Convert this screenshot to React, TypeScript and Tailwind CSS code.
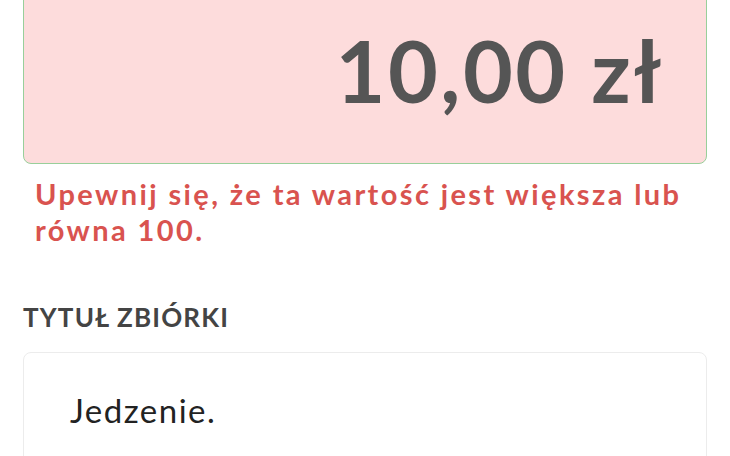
export default function App() {
  return (
    <div className="w-[730px] h-[456px] overflow-hidden bg-white font-['Lato',sans-serif]">
      <div className="px-[23px]">
        <div className="-mt-[20px] h-[184px] rounded-[8px] border border-[#98cf9a] bg-[#fddcdc] flex items-end justify-end pr-[42px] pb-[50px]">
          <span className="text-[86px] leading-none font-bold text-[#555555] tracking-[2.5px]">10,00 zł</span>
        </div>
        <p className="mt-[12px] px-[12px] text-[29px] leading-[36px] font-bold text-[#d9534f] tracking-[2.4px]">
          Upewnij się, że ta wartość jest większa lub równa 100.
        </p>
        <div className="mt-[55px] text-[26px] leading-[28px] font-bold text-[#444444] tracking-[1.2px]">TYTUŁ ZBIÓRKI</div>
        <div className="mt-[21px] h-[140px] rounded-[8px] border border-[#ececec] bg-white px-[46px] pt-[37px]">
          <span className="text-[33px] leading-[40px] text-[#222222] tracking-[1.5px]">Jedzenie.</span>
        </div>
      </div>
    </div>
  );
}
